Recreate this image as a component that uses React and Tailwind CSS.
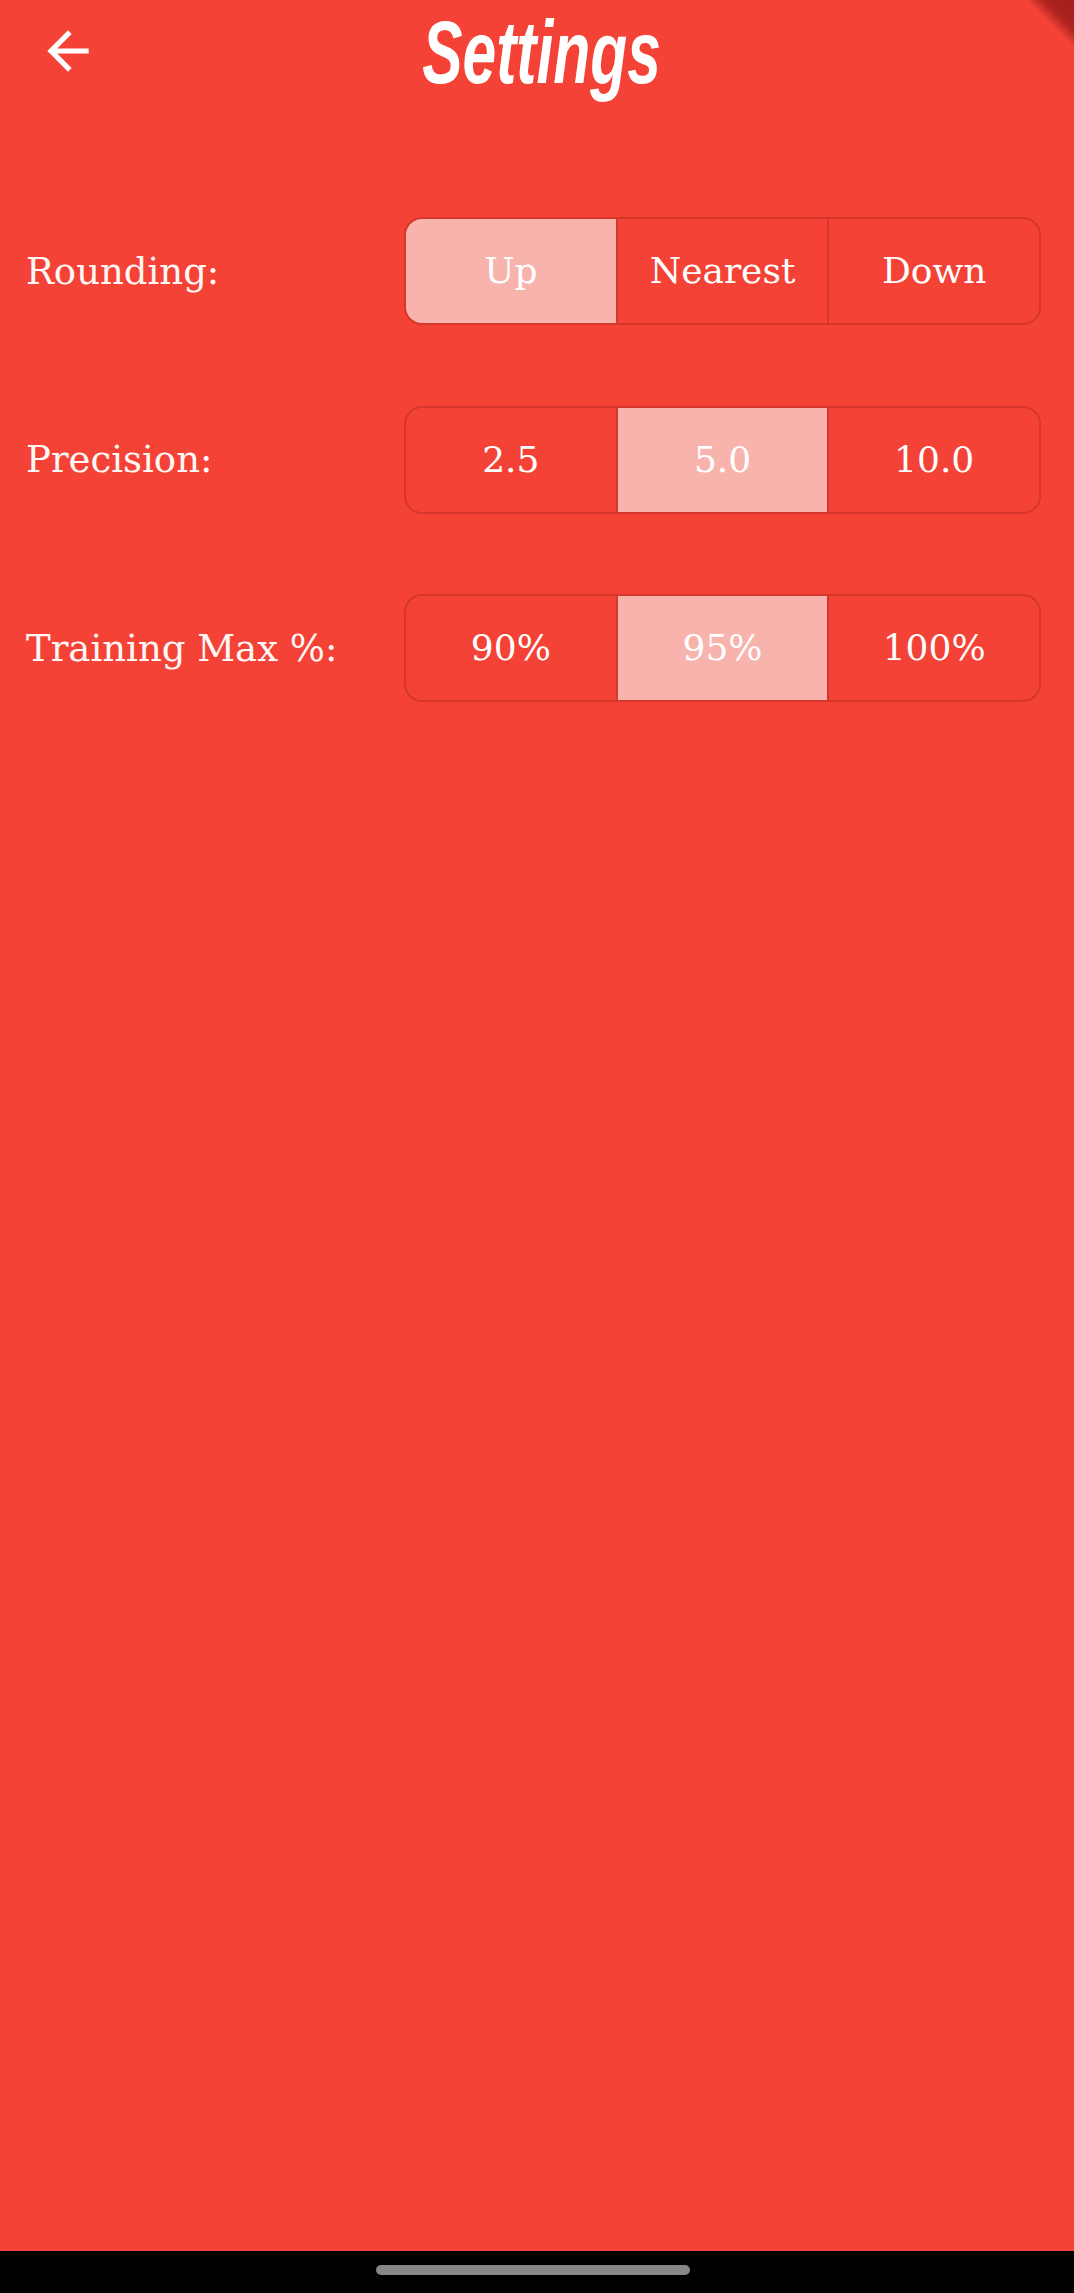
export default function App() {
  const rows = [
    { label: "Rounding:", options: ["Up", "Nearest", "Down"], selected: 0 },
    { label: "Precision:", options: ["2.5", "5.0", "10.0"], selected: 1 },
    { label: "Training Max %:", options: ["90%", "95%", "100%"], selected: 1 },
  ];
  return (
    <div className="relative flex h-[2293px] w-full flex-col overflow-hidden bg-[#f44336] text-white font-['DejaVu_Serif',serif]">
      <div className="pointer-events-none absolute right-0 top-0 h-[48px] w-[48px] bg-[linear-gradient(225deg,#a21f1a_0%,#ad231e_32%,rgba(244,67,54,0)_50%)]" />
      <header className="grid h-[112px] grid-cols-[1fr_auto_1fr] items-start">
        <div className="pl-[37px] pt-[20px]">
          <svg width="62" height="62" viewBox="0 0 24 24" fill="#ffffff">
            <path d="M20 11H7.83l5.59-5.59L12 4l-8 8 8 8 1.41-1.41L7.83 13H20v-2z" />
          </svg>
        </div>
        <div className="pl-[10px] pt-[8px]">
          <h1 className="origin-center scale-x-[0.68] text-[89px] font-bold italic leading-none tracking-normal font-['Liberation_Sans',sans-serif]">
            Settings
          </h1>
        </div>
        <div />
      </header>

      <main className="mt-[105px] flex flex-col gap-[80.5px]">
        {rows.map((row) => (
          <div key={row.label} className="flex h-[108px] items-center">
            <div className="w-[404px] pl-[26px] text-[37px] leading-none text-[#fff8f7]">
              {row.label}
            </div>
            <div className="flex h-[108px] w-[637px] overflow-hidden rounded-[18px] border-2 border-[#d6372d]">
              {row.options.map((opt, i) => (
                <div
                  key={opt}
                  className={
                    (i === row.selected ? "bg-[#f9b3ad] " : "") +
                    (i > 0 ? "border-l-2 border-[#d6372d] " : "") +
                    "flex flex-1 items-center justify-center text-[36px] leading-none text-white"
                  }
                >
                  {opt}
                </div>
              ))}
            </div>
          </div>
        ))}
      </main>

      <div className="flex-1" />
      <div className="flex h-[42px] items-start justify-center bg-black pt-[14px]">
        <div className="mr-[8px] h-[10px] w-[314px] rounded-full bg-[#878787]" />
      </div>
    </div>
  );
}
